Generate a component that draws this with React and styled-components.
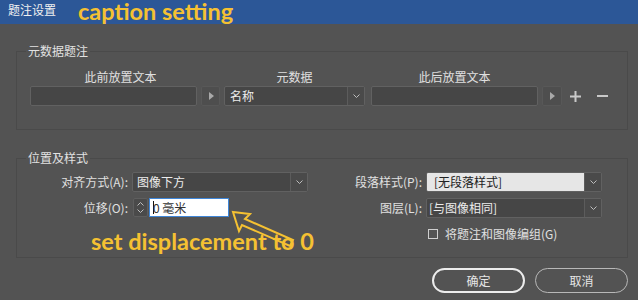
import React from "react";
import styled, { createGlobalStyle } from "styled-components";

const GlobalStyle = createGlobalStyle`
  html, body {
    margin: 0;
    padding: 0;
    background: #535353;
  }
  body {
    width: 638px;
    height: 300px;
    overflow: hidden;
    font-family: "Noto Sans CJK SC", "Noto Sans", sans-serif;
    font-size: 12px;
    color: #dcdcdc;
  }
  * {
    box-sizing: border-box;
  }
`;

const SDialog = styled.div`
  position: relative;
  width: 638px;
  height: 300px;
  display: flex;
  flex-direction: column;
  background: #535353;
`;

const STitleBar = styled.div`
  height: 24px;
  flex: none;
  background: #2c5797;
  display: flex;
  align-items: flex-start;
  padding-left: 8px;
`;

const STitle = styled.span`
  font-size: 12px;
  line-height: 16px;
  color: #f0f0f0;
  margin-top: 2px;
`;

const SCaption = styled.span`
  font-family: Lato, "Open Sans", sans-serif;
  font-weight: 700;
  font-size: 23.5px;
  line-height: 22px;
  color: #f5c132;
  margin-left: 22px;
  margin-top: 0;
`;

const SBody = styled.div`
  padding: 19px 10px 0 16px;
  display: flex;
  flex-direction: column;
`;

const SPanel = styled.fieldset`
  margin: ${(p) => (p.$first ? "0" : "20px 0 0")};
  border: 1px solid #4a4a4a;
  padding: ${(p) => p.$pad};
  min-width: 0;
`;

const SLegend = styled.legend`
  padding: 0 2px;
  margin-left: -2px;
  font-size: 12px;
  line-height: 16px;
  color: #e2e2e2;
`;

/* 元数据题注 */
const SMetaGrid = styled.div`
  display: grid;
  grid-template-columns: 167px 19px 141px 169px 20px 18px 1fr;
  grid-template-rows: 16px 20px;
  column-gap: 4px;
  row-gap: 1px;
  margin-left: 2px;
  align-items: center;

  & > * {
    grid-row: 2;
  }
`;

const SColLabel = styled.div`
  && {
    grid-column: ${(p) => p.$col};
    grid-row: 1;
  }
  text-align: center;
  line-height: 16px;
  color: #e0e0e0;
  padding-left: ${(p) => p.$shift || 0}px;
`;

const STextField = styled.div`
  height: 20px;
  background: #464646;
  border: 1px solid #616161;
  border-radius: 2px;
  margin-left: ${(p) => p.$shift || 0}px;
`;

const SArrowBtn = styled.div`
  height: 20px;
  background: #4e4e4e;
  border: 1px solid #585858;
  border-radius: 2px;
  display: flex;
  align-items: center;
  justify-content: center;
`;

const STriangle = styled.span`
  width: 0;
  height: 0;
  border-top: 4px solid transparent;
  border-bottom: 4px solid transparent;
  border-left: 5px solid #a9a9a9;
  margin-left: 1px;
`;

const SIconCell = styled.div`
  display: flex;
  align-items: center;
  justify-content: center;
  height: 20px;
`;

const SSelect = styled.div`
  height: 20px;
  display: flex;
  border: 1px solid #616161;
  border-radius: 2px;
  overflow: hidden;
  background: #464646;
`;

const SSelectValue = styled.div`
  flex: 1;
  display: flex;
  align-items: center;
  padding-left: ${(p) => p.$pad || 4}px;
  background: ${(p) => (p.$light ? "#e6e6e6" : "transparent")};
  color: ${(p) => (p.$light ? "#222" : "#ececec")};
  line-height: 18px;
  white-space: nowrap;
`;

const SSelectToggle = styled.div`
  width: 17px;
  flex: none;
  border-left: 1px solid #5c5c5c;
  background: #4a4a4a;
  display: flex;
  align-items: center;
  justify-content: center;
`;

/* 位置及样式 */
const SStyleGrid = styled.div`
  display: grid;
  grid-template-columns: 100px 176px 1fr 176px;
  grid-template-rows: 20px 20px 20px;
  column-gap: 4px;
  row-gap: 6px;
  align-items: center;
`;

const SFieldLabel = styled.div`
  text-align: right;
  line-height: 16px;
  color: #e0e0e0;
  white-space: nowrap;
`;

const SOffsetRow = styled.div`
  display: flex;
  height: 20px;
  gap: 1px;
  padding-left: 1px;
`;

const SSpinner = styled.div`
  width: 15px;
  height: 19px;
  background: #4a4a4a;
  border: 1px solid #5e5e5e;
  border-radius: 2px;
  display: flex;
  flex-direction: column;
  align-items: center;
  justify-content: center;
  gap: 3px;
`;

const SNumberInput = styled.div`
  width: 80px;
  height: 19px;
  background: #ffffff;
  border: 1px solid #3f86d8;
  display: flex;
  align-items: center;
  padding-left: 3px;
  color: #333;
  line-height: 16px;
`;

const SCaret = styled.span`
  display: inline-block;
  width: 1px;
  height: 13px;
  background: #111;
  margin-right: -1px;
`;

const SCheckRow = styled.label`
  grid-column: 4;
  grid-row: 3;
  display: flex;
  align-items: center;
  gap: 7px;
  padding-left: 2px;
  color: #e0e0e0;
  line-height: 16px;
  white-space: nowrap;
`;

const SCheckBox = styled.span`
  width: 10px;
  height: 10px;
  border: 1px solid #cfcfcf;
  flex: none;
`;

const SButtons = styled.div`
  display: flex;
  justify-content: flex-end;
  gap: 10px;
  margin-top: 10px;
`;

const SButton = styled.div`
  width: 93px;
  height: 25px;
  border-radius: 13px;
  border: ${(p) => (p.$primary ? "2px solid #ececec" : "1px solid #b8b8b8")};
  display: flex;
  align-items: center;
  justify-content: center;
  color: #e6e6e6;
  font-size: 12px;
`;

/* annotation drawn over the dialog */
const SOverlay = styled.div`
  position: absolute;
  inset: 0;
  pointer-events: none;
`;

const SArrowSvg = styled.svg`
  position: absolute;
  left: 0;
  top: 0;
`;

const SNote = styled.div`
  position: absolute;
  left: 91px;
  top: 228px;
  font-family: Lato, "Open Sans", sans-serif;
  font-weight: 700;
  font-size: 23.5px;
  line-height: 26px;
  color: #f5c132;
  white-space: nowrap;
`;

const Chevron = ({ up }) => (
  <svg width="7" height="4" viewBox="0 0 7 4">
    <path
      d={up ? "M0.5 3.5 L3.5 0.5 L6.5 3.5" : "M0.5 0.5 L3.5 3.5 L6.5 0.5"}
      fill="none"
      stroke="#bdbdbd"
      strokeWidth="1"
    />
  </svg>
);

const Plus = () => (
  <svg width="11" height="11" viewBox="0 0 11 11">
    <path d="M5.5 0 V11 M0 5.5 H11" stroke="#c9c9c9" strokeWidth="2" />
  </svg>
);

const Minus = () => (
  <svg width="11" height="2" viewBox="0 0 11 2">
    <path d="M0 1 H11" stroke="#c9c9c9" strokeWidth="2" />
  </svg>
);

const Select = ({ value, light, pad }) => (
  <SSelect>
    <SSelectValue $light={light} $pad={pad}>
      {value}
    </SSelectValue>
    <SSelectToggle>
      <Chevron />
    </SSelectToggle>
  </SSelect>
);

const App = () => {
  return (
    <SDialog>
      <GlobalStyle />
      <STitleBar>
        <STitle>题注设置</STitle>
        <SCaption>caption setting</SCaption>
      </STitleBar>

      <SBody>
        <SPanel $first $pad="10px 10px 23px 11px">
          <SLegend>元数据题注</SLegend>
          <SMetaGrid>
            <SColLabel $col={1} $shift={14}>此前放置文本</SColLabel>
            <SColLabel $col={3} $shift={-12}>元数据</SColLabel>
            <SColLabel $col={4} $shift={2}>此后放置文本</SColLabel>

            <STextField />
            <SArrowBtn>
              <STriangle />
            </SArrowBtn>
            <Select value="名称" pad={5} />
            <STextField $shift={2} />
            <SArrowBtn>
              <STriangle />
            </SArrowBtn>
            <SIconCell>
              <Plus />
            </SIconCell>
            <SIconCell>
              <Minus />
            </SIconCell>
          </SMetaGrid>
        </SPanel>

        <SPanel $pad="6px 25px 13px 11px">
          <SLegend>位置及样式</SLegend>
          <SStyleGrid>
            <SFieldLabel>对齐方式(A):</SFieldLabel>
            <Select value="图像下方" />
            <SFieldLabel>段落样式(P):</SFieldLabel>
            <Select value="[无段落样式]" light pad={7} />

            <SFieldLabel>位移(O):</SFieldLabel>
            <SOffsetRow>
              <SSpinner>
                <Chevron up />
                <Chevron />
              </SSpinner>
              <SNumberInput>
                <SCaret />0 毫米
              </SNumberInput>
            </SOffsetRow>
            <SFieldLabel>图层(L):</SFieldLabel>
            <Select value="[与图像相同]" pad={2} />

            <SCheckRow>
              <SCheckBox />
              将题注和图像编组(G)
            </SCheckRow>
          </SStyleGrid>
        </SPanel>

        <SButtons>
          <SButton $primary>确定</SButton>
          <SButton>取消</SButton>
        </SButtons>
      </SBody>

      <SOverlay>
        <SArrowSvg width="638" height="300" viewBox="0 0 638 300">
          <path
            d="M233 212 L250 214 L245 219 L293 240 L290 246 L242 225 L239 231 Z"
            fill="none"
            stroke="#f5c132"
            strokeWidth="2"
            strokeLinejoin="miter"
          />
        </SArrowSvg>
        <SNote>set displacement to 0</SNote>
      </SOverlay>
    </SDialog>
  );
};

export default App;
